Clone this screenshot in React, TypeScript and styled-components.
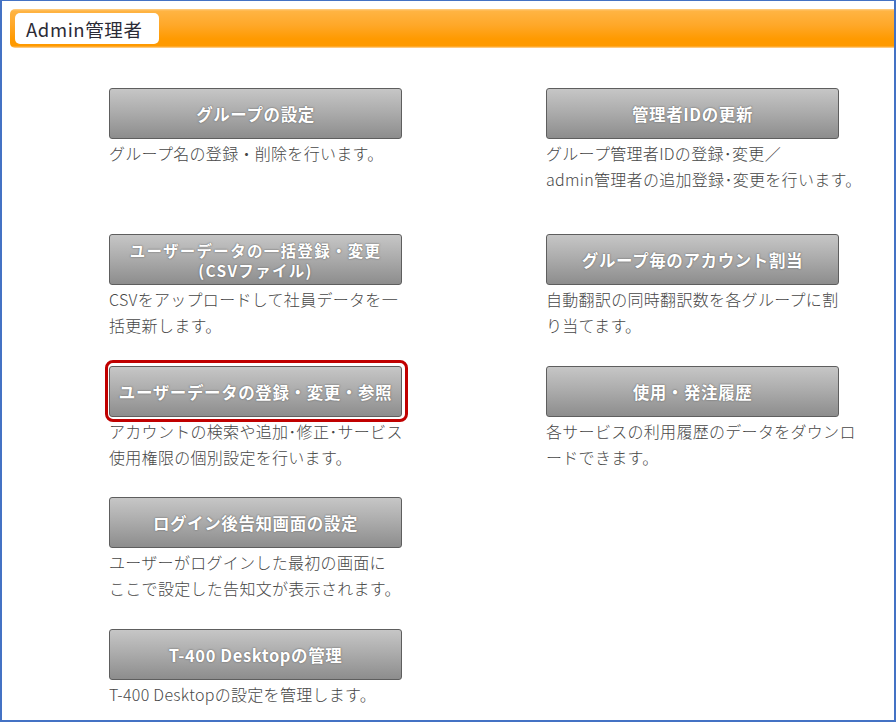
import React from 'react';
import styled, { createGlobalStyle } from 'styled-components';

const GlobalStyle = createGlobalStyle`
  html, body {
    margin: 0;
    padding: 0;
    background: #ffffff;
  }
  body {
    font-family: "Noto Sans CJK JP", "Noto Sans", sans-serif;
  }
`;

interface MenuItem {
  id: string;
  label: string[];
  desc: string[];
  highlighted?: boolean;
}

const Frame = styled.div`
  box-sizing: border-box;
  width: 896px;
  height: 722px;
  border-style: solid;
  border-color: #4472c4;
  border-width: 1px 2px 2px 2px;
  padding: 8px 0 0 8px;
  overflow: hidden;
  background: #ffffff;
`;

const HeaderBar = styled.div`
  box-sizing: border-box;
  height: 39px;
  display: flex;
  align-items: center;
  padding-left: 5px;
  border-radius: 5px 0 0 5px;
  background: linear-gradient(to bottom, #ffd08a 0px, #ffb443 2px, #ffa829 16px, #ff9a00 30px, #ff9a00 37px, #ffd9a6 39px);
`;

const HeaderTab = styled.div`
  box-sizing: border-box;
  width: 144px;
  height: 31px;
  background: #ffffff;
  border-radius: 5px;
  display: flex;
  align-items: center;
  padding-left: 11px;
  font-size: 18.5px;
  color: #2b2b36;
  letter-spacing: 0.6px;
`;

const Grid = styled.div`
  display: grid;
  grid-template-columns: 300px 330px;
  grid-template-rows: 146px 132px 131px 132px auto;
  column-gap: 137px;
  margin: 40px 0 0 99px;
`;

const Cell = styled.div`
  display: flex;
  flex-direction: column;
  align-items: flex-start;
`;

const ButtonWrap = styled.div`
  position: relative;
`;

const MenuButton = styled.div<{ $lines: number }>`
  box-sizing: border-box;
  width: 293px;
  height: 51px;
  border: 1px solid #5e5e5e;
  border-radius: 3px;
  background: linear-gradient(to bottom, #c6c6c6 0%, #adadad 45%, #8d8d8d 100%);
  display: flex;
  flex-direction: column;
  align-items: center;
  justify-content: center;
  color: #ffffff;
  font-weight: 700;
  font-size: ${p => (p.$lines > 1 ? '15.5px' : '16.5px')};
  letter-spacing: ${p => (p.$lines > 1 ? '1.3px' : '0.6px')};
  text-shadow: 0 0 2px #6a6a6a, 0 0 1px #777777;
  white-space: nowrap;
`;

const ButtonLine = styled.span`
  display: block;
  line-height: 20px;
  height: 20px;
`;

const Highlight = styled.span`
  position: absolute;
  top: -6px;
  bottom: -5px;
  left: -4px;
  right: -6px;
  border: 3px solid #c00000;
  border-radius: 8px;
  pointer-events: none;
`;

const Desc = styled.p`
  margin: 2px 0 0 0;
  font-size: 16px;
  font-weight: 300;
  line-height: 25.5px;
  color: #474747;
  white-space: nowrap;
  letter-spacing: 0.3px;
`;

const leftItems: MenuItem[] = [
  { id: 'group', label: ['グループの設定'], desc: ['グループ名の登録・削除を行います。'] },
  {
    id: 'csv',
    label: ['ユーザーデータの一括登録・変更', '(CSVファイル)'],
    desc: ['CSVをアップロードして社員データを一', '括更新します。'],
  },
  {
    id: 'user',
    label: ['ユーザーデータの登録・変更・参照'],
    desc: ['アカウントの検索や追加･修正･サービス', '使用権限の個別設定を行います。'],
    highlighted: true,
  },
  {
    id: 'notice',
    label: ['ログイン後告知画面の設定'],
    desc: ['ユーザーがログインした最初の画面に', 'ここで設定した告知文が表示されます。'],
  },
  { id: 'desktop', label: ['T-400 Desktopの管理'], desc: ['T-400 Desktopの設定を管理します。'] },
];

const rightItems: MenuItem[] = [
  {
    id: 'admin',
    label: ['管理者IDの更新'],
    desc: ['グループ管理者IDの登録･変更／', 'admin管理者の追加登録･変更を行います。'],
  },
  {
    id: 'account',
    label: ['グループ毎のアカウント割当'],
    desc: ['自動翻訳の同時翻訳数を各グループに割', 'り当てます。'],
  },
  {
    id: 'history',
    label: ['使用・発注履歴'],
    desc: ['各サービスの利用履歴のデータをダウンロ', 'ードできます。'],
  },
];

const MenuCell: React.FC<{ item: MenuItem; col: number; row: number }> = ({ item, col, row }) => (
  <Cell style={{ gridColumn: col, gridRow: row }}>
    <ButtonWrap>
      <MenuButton $lines={item.label.length}>
        {item.label.map(l => (
          <ButtonLine key={l}>{l}</ButtonLine>
        ))}
      </MenuButton>
      {item.highlighted && <Highlight />}
    </ButtonWrap>
    <Desc>
      {item.desc.map((d, i) => (
        <React.Fragment key={d}>
          {i > 0 && <br />}
          {d}
        </React.Fragment>
      ))}
    </Desc>
  </Cell>
);

const App: React.FC = () => (
  <>
    <GlobalStyle />
    <Frame>
      <HeaderBar>
        <HeaderTab>Admin管理者</HeaderTab>
      </HeaderBar>
      <Grid>
        {leftItems.map((item, i) => (
          <MenuCell key={item.id} item={item} col={1} row={i + 1} />
        ))}
        {rightItems.map((item, i) => (
          <MenuCell key={item.id} item={item} col={2} row={i + 1} />
        ))}
      </Grid>
    </Frame>
  </>
);

export default App;
